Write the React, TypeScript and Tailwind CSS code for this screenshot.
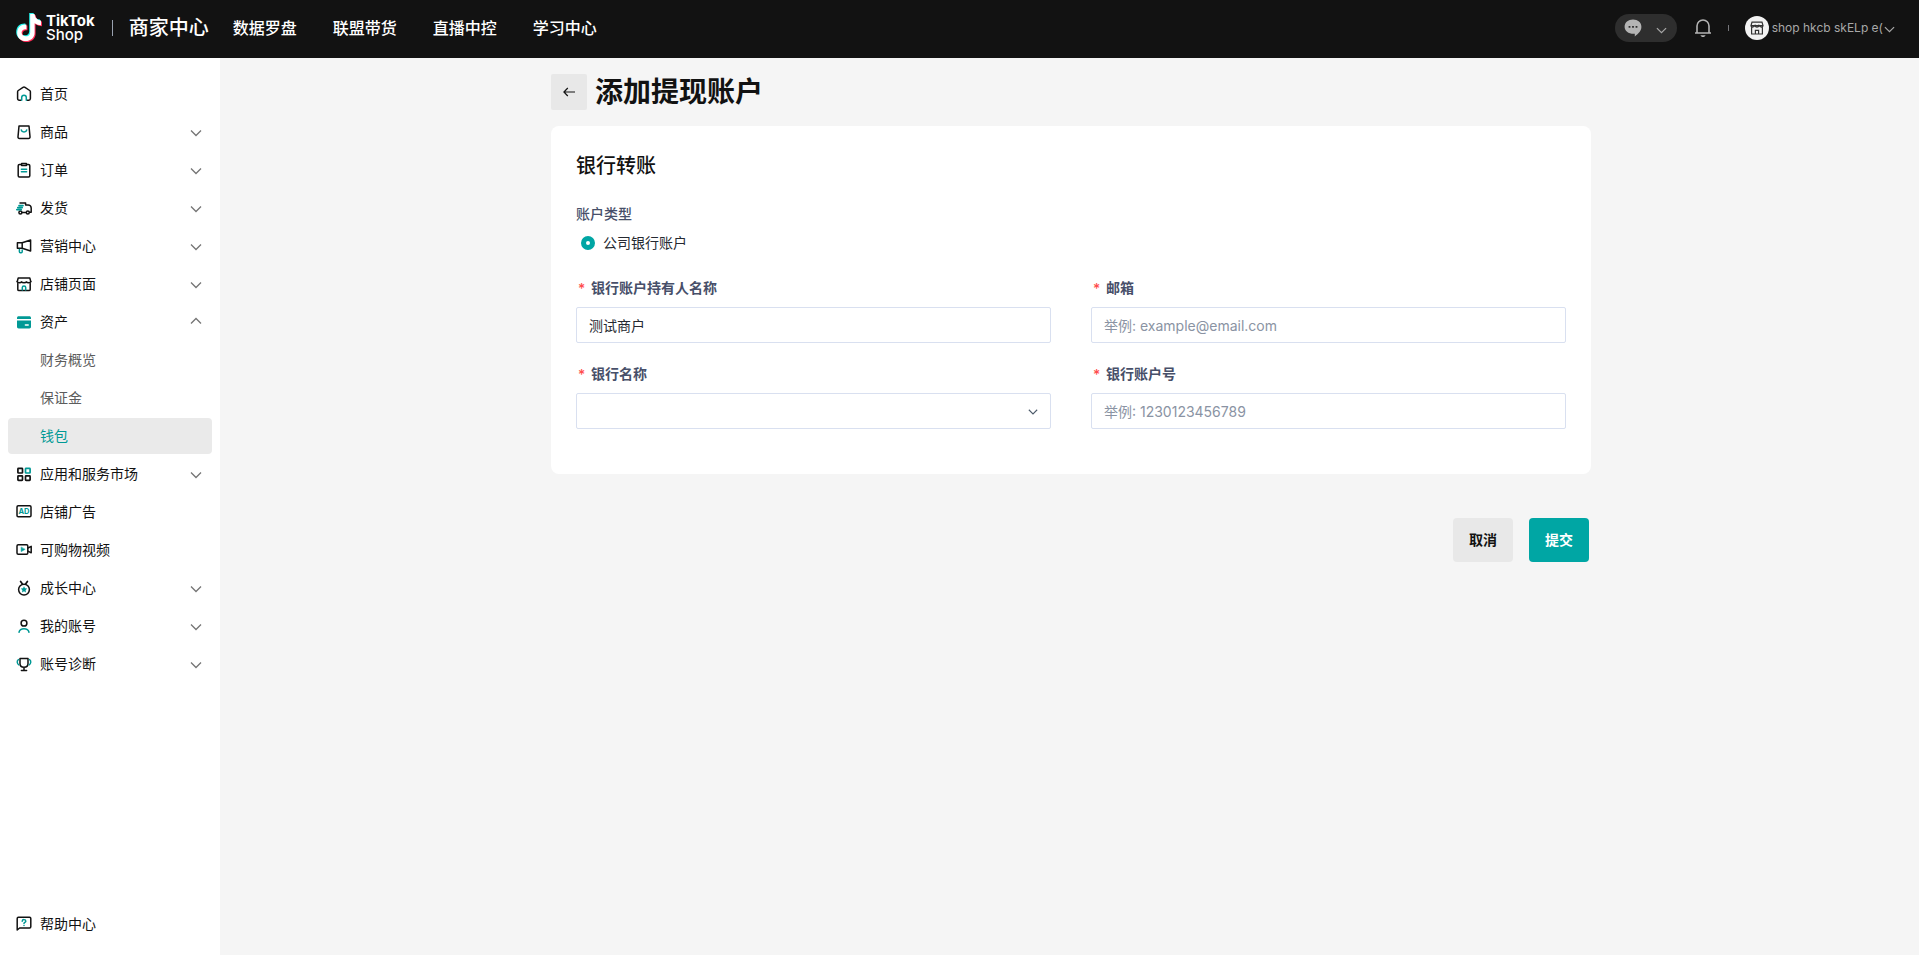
import { useState } from 'react'
import type { ReactNode } from 'react'

type NavItem = {
  label: string
  icon: ReactNode
  expandable?: boolean
  open?: boolean
  children?: { label: string; active?: boolean }[]
}

const Icon = ({ children }: { children: ReactNode }) => (
  <svg viewBox="0 0 16 16" className="size-4 shrink-0" fill="none" stroke="#121212" strokeWidth="1.5" strokeLinecap="round" strokeLinejoin="round" aria-hidden="true">
    {children}
  </svg>
)

const Chevron = ({ className, up = false }: { className: string; up?: boolean }) => (
  <svg viewBox="0 0 12 12" className={className} fill="none" stroke="currentColor" strokeWidth="1.3" aria-hidden="true">
    <path d={up ? 'M1 7.5 6 2.5l5 5' : 'M1 4.5l5 5 5-5'} />
  </svg>
)

const teal = '#009995'

const navItems: NavItem[] = [
  {
    label: '首页',
    icon: (
      <Icon>
        <path d="M4.6 14.2H3.2a1.6 1.6 0 0 1-1.6-1.6V5.8c0-.5.3-1 .7-1.3L7 1.3a2 2 0 0 1 2 0l4.7 3.2c.4.3.7.8.7 1.3v6.8a1.6 1.6 0 0 1-1.6 1.6h-1.4" />
        <path d="M5.7 14.2v-2.6a2.3 2.3 0 0 1 4.6 0v2.6" stroke={teal} />
      </Icon>
    ),
  },
  {
    label: '商品',
    expandable: true,
    icon: (
      <Icon>
        <path d="M3 2h10l1 10.800a1.400 1.400 0 0 1-1.400 1.600H3.400A1.400 1.400 0 0 1 2 12.800z" />
        <path d="M5.300 6C6 8.800 10 8.800 10.700 6" stroke={teal} />
      </Icon>
    ),
  },
  {
    label: '订单',
    expandable: true,
    icon: (
      <Icon>
        <rect x="2.200" y="2.600" width="11.600" height="12.400" rx="1.200" />
        <path d="M5.600 1.400h4.800v2H5.600z" fill="#fff" />
        <path d="M5.400 7.200h5.200M5.400 9.800h5.200" stroke={teal} />
      </Icon>
    ),
  },
  {
    label: '发货',
    expandable: true,
    icon: (
      <Icon>
        <path d="M4 3h5.600v2h2.600c1.600 0 3 1.400 3 3v4.200h-1.600M9.800 12.600H6.200" />
        <circle cx="4.400" cy="12.600" r="1.500" />
        <circle cx="11.800" cy="12.600" r="1.500" />
        <path d="M3 5.600h4M1.800 7.600h4.400M.8 9.600h4.400" stroke={teal} strokeWidth="1.700" />
      </Icon>
    ),
  },
  {
    label: '营销中心',
    expandable: true,
    icon: (
      <Icon>
        <path d="M1.400 4.800h4.800L14.600 2v11L6.200 10.200H1.400zM6.200 4.800v5.400" />
        <path d="M3.400 11.400v2.400c0 .6.400 1 1 1h.8c.6 0 1-.4 1-1v-1.800" stroke={teal} />
      </Icon>
    ),
  },
  {
    label: '店铺页面',
    expandable: true,
    icon: (
      <Icon>
        <path d="M1.800 7.400v6c0 .7.500 1.200 1.200 1.200h10c.7 0 1.200-.5 1.200-1.200v-6M1.200 5.600 2.200 2h11.600l1 3.600" />
        <path d="M1.200 5.800c.4 1.200 3.800 1.200 4.400 0 .6 1.200 4.200 1.200 4.800 0 .6 1.200 4 1.200 4.400 0" />
        <path d="M6.300 14v-2.400a1.700 1.700 0 0 1 3.400 0V14" stroke={teal} />
      </Icon>
    ),
  },
  {
    label: '资产',
    expandable: true,
    open: true,
    icon: (
      <Icon>
        <path d="M1 5V3.800C1 2.900 1.700 2.200 2.600 2.200h10.800c.9 0 1.600.7 1.600 1.600V5z" fill={teal} stroke="none" />
        <path d="M1 6.400h14v6.400c0 .9-.7 1.600-1.600 1.600H2.600c-.9 0-1.600-.7-1.600-1.600z" fill={teal} stroke="none" />
        <path d="M9.400 11h2.800" stroke="#fff" />
      </Icon>
    ),
    children: [{ label: '财务概览' }, { label: '保证金' }, { label: '钱包', active: true }],
  },
  {
    label: '应用和服务市场',
    expandable: true,
    icon: (
      <Icon>
        <rect x="1.900" y="2.400" width="4.600" height="4.600" rx=".6" strokeWidth="1.700" />
        <rect x="9.500" y="2.400" width="4.600" height="4.600" rx=".6" stroke={teal} strokeWidth="1.700" />
        <rect x="1.900" y="9.800" width="4.600" height="4.600" rx=".6" strokeWidth="1.700" />
        <rect x="9.500" y="9.800" width="4.600" height="4.600" rx=".6" strokeWidth="1.700" />
      </Icon>
    ),
  },
  {
    label: '店铺广告',
    icon: (
      <Icon>
        <rect x="1" y="1.800" width="14" height="11" rx="1.200" />
        <text x="8" y="10.200" textAnchor="middle" fontSize="7.500" fontWeight="700" fill={teal} stroke="none">AD</text>
      </Icon>
    ),
  },
  {
    label: '可购物视频',
    icon: (
      <Icon>
        <rect x="1" y="2.800" width="10.800" height="9.400" rx="1.200" />
        <path d="M12 6l3.200-1.600v6.400L12 9.200" />
        <path d="M5.200 5.400v4.200l3.600-2.100z" fill={teal} stroke={teal} strokeWidth=".6" />
      </Icon>
    ),
  },
  {
    label: '成长中心',
    expandable: true,
    icon: (
      <Icon>
        <circle cx="8" cy="9.600" r="5.400" />
        <path d="M4.600 1.400l2 2.800M11.400 1.400l-2 2.800" strokeWidth="1.700" />
        <path d="M8 6.300l1 2 2.200.3-1.600 1.600.4 2.200-2-1.100-2 1.100.4-2.200-1.600-1.600 2.200-.3z" fill={teal} stroke="none" />
      </Icon>
    ),
  },
  {
    label: '我的账号',
    expandable: true,
    icon: (
      <Icon>
        <circle cx="8" cy="5.200" r="2.900" />
        <path d="M3 14.200c1.200-4.600 8.800-4.600 10 0" stroke={teal} />
      </Icon>
    ),
  },
  {
    label: '账号诊断',
    expandable: true,
    icon: (
      <Icon>
        <path d="M4 2.400h8v5.200c0 5-8 5-8 0zM8 11.400v3M5.400 14.600h5.200" />
        <path d="M2.400 3.600C.6 4.800 1 7.800 2.800 8.800M13.600 3.600c1.800 1.200 1.400 4.200-.4 5.200" stroke={teal} />
      </Icon>
    ),
  },
]

const topLinks = ['数据罗盘', '联盟带货', '直播中控', '学习中心']

function Logo() {
  const note = 'M14.200 1h4.400c.4 3.800 2.800 6.200 6.400 6.600v4.600c-2.400 0-4.600-.8-6.400-2v9.600c0 10.600-16.800 11.200-17.400.6C1 14.600 5.200 11.200 10.400 11.600v4.700c-2.800-.4-4.800 1-4.800 3.500.2 4.800 8.600 4.800 8.600-.4z'
  return (
    <a href="#" aria-label="TikTok Shop" className="flex items-center gap-[3px]">
      <svg viewBox="0 0 28 32" className="h-8 w-7" aria-hidden="true">
        <path d={note} fill="#25f4ee" />
        <path d={note} fill="#fe2c55" transform="translate(2 2)" />
        <path d={note} fill="#fff" transform="translate(1 1)" />
      </svg>
      <span className="flex flex-col text-[15px] leading-[14px] text-white">
        <span className="font-bold">TikTok</span>
        <span className="font-medium">Shop</span>
      </span>
    </a>
  )
}

function Header() {
  return (
    <header className="flex h-[58px] shrink-0 items-center bg-[#121212] pr-6 pb-0.5 pl-[15px]">
      <Logo />
      <span className="ml-[17px] h-4 w-px bg-gray-400" />
      <span className="ml-4 text-xl font-medium text-white">商家中心</span>
      <nav className="ml-6 flex gap-9">
        {topLinks.map(l => (
          <a key={l} href="#" className="text-base font-medium text-white">{l}</a>
        ))}
      </nav>
      <div className="ml-auto flex items-center text-[#a8a8a8]">
        <button type="button" aria-label="消息" className="flex h-7 w-[62px] items-center justify-between rounded-full bg-[#2e2e2e] pr-2.5 pl-[9px]">
          <svg viewBox="0 0 18 18" className="size-[18px]" aria-hidden="true">
            <path d="M9 .6c4.800 0 8.400 3 8.400 7.200 0 4-2.600 6.600-6.600 9.600v-2.600C4.600 15.200.6 12.200.6 7.800.6 3.600 4.200.6 9 .6z" fill="#b4b4b4" />
            <path d="M4.600 7h1.800v1.800H4.600zM8.100 7h1.800v1.800H8.100zM11.600 7h1.800v1.800h-1.800z" fill="#2e2e2e" />
          </svg>
          <Chevron className="mt-0.5 size-[11px]" />
        </button>
        <button type="button" aria-label="通知" className="ml-[17px]">
          <svg viewBox="0 0 18 20" className="h-5 w-[18px]" fill="none" stroke="#b4b4b4" strokeWidth="1.600" aria-hidden="true">
            <path d="M1 15h16M3 15V8a6 6 0 0 1 12 0v7" />
            <path d="M6.500 17.200h5c-.4 2.400-4.600 2.400-5 0z" fill="#b4b4b4" stroke="none" />
          </svg>
        </button>
        <span className="mx-4 h-1.5 w-px bg-[#75757a]" />
        <button type="button" className="flex items-center">
          <span className="flex size-6 items-center justify-center rounded-full bg-[#f2f2f2]">
            <svg viewBox="0 0 14 14" className="size-3.5" fill="none" stroke="#333" strokeWidth="1.200" aria-hidden="true">
              <path d="M1.600 6v7h10.800V6M1 4.600 2 1.200h10l1 3.400zM1 4.600c0 2 3 2 4 0 .6 2 3.400 2 4 0 1 2 4 2 4 0M5.400 13V9.400h3.200V13" />
            </svg>
          </span>
          <span className="ml-[3px] text-xs whitespace-nowrap">shop hkcb skELp e(</span>
          <Chevron className="ml-px size-[11px]" />
        </button>
      </div>
    </header>
  )
}

function Sidebar() {
  return (
    <aside className="flex w-[220px] shrink-0 flex-col bg-white px-2 pt-[18px] pb-[13px]">
      <nav className="flex flex-col gap-0.5 text-sm text-[#121212]">
        {navItems.map(item => (
          <div key={item.label} className="flex flex-col gap-0.5">
            <a href="#" className="flex h-9 items-center gap-2 rounded pr-2.5 pl-2">
              {item.icon}
              <span>{item.label}</span>
              {item.expandable && <Chevron up={item.open} className="ml-auto size-3 text-[#757575]" />}
            </a>
            {item.children?.map(c => (
              <a
                key={c.label}
                href="#"
                className={c.active
                  ? 'flex h-9 items-center rounded bg-[#eaeaea] pl-8 text-[#009995]'
                  : 'flex h-9 items-center rounded pl-8 text-[#5c5c5c]'}
              >
                {c.label}
              </a>
            ))}
          </div>
        ))}
      </nav>
      <a href="#" className="mt-auto flex h-9 items-center gap-2 pl-2 text-sm text-[#121212]">
        <Icon>
          <path d="M1.200 14V2.400c0-.7.500-1.200 1.200-1.200h11.200c.7 0 1.200.5 1.200 1.200v8.400c0 .7-.5 1.200-1.200 1.200H3.600z" />
          <path d="M6.200 5.200c.2-2.200 3.600-2 3.600 0 0 1.200-1.800 1.200-1.800 2.200M8 9.400v.2" stroke={teal} />
        </Icon>
        帮助中心
      </a>
    </aside>
  )
}

function Field({ id, label, children }: { id: string; label: string; children: ReactNode }) {
  return (
    <div>
      <label htmlFor={id} className="flex h-5 items-center text-sm font-bold text-[#474f69]">
        <span className="w-[15px] shrink-0 pt-0.5 pl-0.5 font-medium text-[#ff4c4c]">*</span>
        {label}
      </label>
      {children}
    </div>
  )
}

const inputClass = 'mt-[9px] block h-9 w-full rounded-xs border border-[#d9e0f0] bg-white px-3 text-sm text-[#252931] placeholder:text-[#8a93a3] focus:outline-none focus:border-[#00a6a4]'

export default function App() {
  const [holder, setHolder] = useState('测试商户')
  const [email, setEmail] = useState('')
  const [bank, setBank] = useState('')
  const [account, setAccount] = useState('')

  return (
    <div className="flex min-h-screen flex-col bg-[#f5f5f5] font-[Inter,'Noto_Sans_CJK_SC',sans-serif]">
      <Header />
      <div className="flex flex-1">
        <Sidebar />
        <main className="flex-1 pt-4 pl-[3px]">
          <form className="mx-auto max-w-[1040px]" onSubmit={e => e.preventDefault()}>
            <div className="flex items-center gap-2">
              <button type="button" aria-label="返回" className="flex size-9 items-center justify-center rounded-xs bg-[#e8e8e8]">
                <svg viewBox="0 0 12 12" className="size-3" fill="none" stroke="#121212" strokeWidth="1.200" aria-hidden="true">
                  <path d="M12 6H1M4.800 2 .9 6l3.900 4" />
                </svg>
              </button>
              <h1 className="text-[28px] leading-9 font-bold text-[#121212]">添加提现账户</h1>
            </div>

            <section className="mt-4 rounded-lg bg-white px-[25px] pt-[25px] pb-[45px]">
              <h2 className="text-xl leading-[30px] font-medium text-[#121212]">银行转账</h2>
              <fieldset className="mt-[23px]">
                <legend className="block h-5 text-sm leading-5 font-medium text-[#474f69]">账户类型</legend>
                <label className="mt-[9px] flex h-5 items-center gap-2 pl-[5px] text-sm text-[#252931]">
                  <input
                    type="radio"
                    name="accountType"
                    defaultChecked
                    className="size-3.5 appearance-none rounded-full border-[5px] border-[#00a6a4] bg-white"
                  />
                  公司银行账户
                </label>
              </fieldset>
              <div className="mt-[25px] grid grid-cols-2 gap-x-10 gap-y-[21px]">
                <Field id="holder" label="银行账户持有人名称">
                  <input id="holder" type="text" value={holder} onChange={e => setHolder(e.target.value)} className={inputClass} />
                </Field>
                <Field id="email" label="邮箱">
                  <input id="email" type="email" value={email} onChange={e => setEmail(e.target.value)} placeholder="举例: example@email.com" className={inputClass} />
                </Field>
                <Field id="bank" label="银行名称">
                  <div className="relative">
                    <select id="bank" value={bank} onChange={e => setBank(e.target.value)} className={`${inputClass} appearance-none`}>
                      <option value=""></option>
                    </select>
                    <Chevron className="pointer-events-none absolute inset-y-0 right-[13px] my-auto size-2.5 text-[#4d5b6b]" />
                  </div>
                </Field>
                <Field id="account" label="银行账户号">
                  <input id="account" type="text" value={account} onChange={e => setAccount(e.target.value)} placeholder="举例: 1230123456789" className={inputClass} />
                </Field>
              </div>
            </section>

            <div className="mt-11 flex justify-end gap-4 pr-0.5">
              <button type="button" className="h-11 rounded bg-[#e8e8e8] px-4 text-sm font-bold text-[#121212]">取消</button>
              <button type="submit" className="h-11 rounded bg-[#00a6a4] px-4 text-sm font-bold text-white">提交</button>
            </div>
          </form>
        </main>
      </div>
    </div>
  )
}
